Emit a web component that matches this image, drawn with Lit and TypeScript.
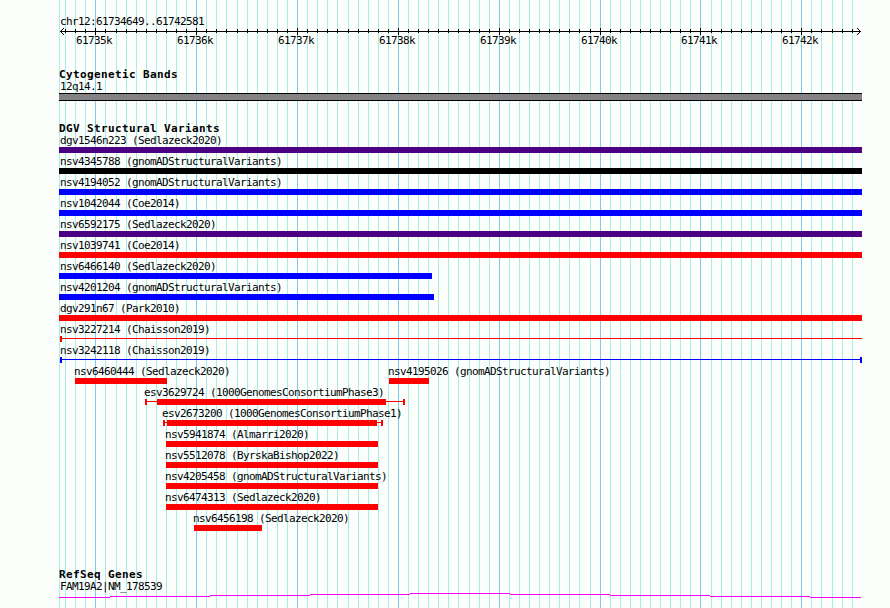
import { LitElement, css, html, nothing, svg } from 'lit'
import { customElement, property } from 'lit/decorators.js'
import { styleMap } from 'lit/directives/style-map.js'

const VIEW_START = 61734649
const VIEW_END = 61742581
const LEFT = 60
const SCALE = 800 / (VIEW_END - VIEW_START + 1)

const toX = (pos: number) => Math.round(LEFT + (pos - VIEW_START) * SCALE)

interface Tick {
  x: number
  major: boolean
  label: string
}

const ticks: Tick[] = []
for (let pos = Math.ceil(VIEW_START / 100) * 100; toX(pos) < LEFT + 800; pos += 100) {
  ticks.push({ x: toX(pos), major: pos % 1000 === 0, label: `${pos / 1000}k` })
}

// All coordinates are pixels on the panel. Whiskers mark the outer bounds of a variant.
interface Variant {
  name: string
  color: string
  label: number
  box?: [number, number]
  line?: [number, number]
  caps?: number[]
}

const full: [number, number] = [59, 862]

const rows: Variant[][] = [
  [{ name: 'dgv1546n223 (Sedlazeck2020)', color: '#4b0082', label: 60, box: full }],
  [{ name: 'nsv4345788 (gnomADStructuralVariants)', color: '#000', label: 60, box: full }],
  [{ name: 'nsv4194052 (gnomADStructuralVariants)', color: '#00f', label: 60, box: full }],
  [{ name: 'nsv1042044 (Coe2014)', color: '#00f', label: 60, box: full }],
  [{ name: 'nsv6592175 (Sedlazeck2020)', color: '#4b0082', label: 60, box: full }],
  [{ name: 'nsv1039741 (Coe2014)', color: '#f00', label: 60, box: full }],
  [{ name: 'nsv6466140 (Sedlazeck2020)', color: '#00f', label: 60, box: [59, 432] }],
  [{ name: 'nsv4201204 (gnomADStructuralVariants)', color: '#00f', label: 60, box: [59, 434] }],
  [{ name: 'dgv291n67 (Park2010)', color: '#f00', label: 60, box: full }],
  [{ name: 'nsv3227214 (Chaisson2019)', color: '#f00', label: 60, line: [60, 862], caps: [60] }],
  [{ name: 'nsv3242118 (Chaisson2019)', color: '#00f', label: 60, line: [60, 862], caps: [60, 860] }],
  [
    { name: 'nsv6460444 (Sedlazeck2020)', color: '#f00', label: 74, box: [75, 167] },
    { name: 'nsv4195026 (gnomADStructuralVariants)', color: '#f00', label: 388, box: [389, 429] },
  ],
  [{ name: 'esv3629724 (1000GenomesConsortiumPhase3)', color: '#f00', label: 144, box: [157, 386], line: [145, 405], caps: [145, 403] }],
  [{ name: 'esv2673200 (1000GenomesConsortiumPhase1)', color: '#f00', label: 162, box: [167, 377], line: [163, 383], caps: [163, 381] }],
  [{ name: 'nsv5941874 (Almarri2020)', color: '#f00', label: 165, box: [166, 378] }],
  [{ name: 'nsv5512078 (ByrskaBishop2022)', color: '#f00', label: 165, box: [166, 378] }],
  [{ name: 'nsv4205458 (gnomADStructuralVariants)', color: '#f00', label: 165, box: [166, 378] }],
  [{ name: 'nsv6474313 (Sedlazeck2020)', color: '#f00', label: 165, box: [166, 378] }],
  [{ name: 'nsv6456198 (Sedlazeck2020)', color: '#f00', label: 193, box: [194, 262] }],
]

@customElement('panel-grid')
export class PanelGrid extends LitElement {
  static styles = css`
    :host { display: block; }
    svg { display: block; shape-rendering: crispEdges; }
    .minor { fill: #a9ecea; }
    .major { fill: #7ccbeb; }
  `

  render() {
    return html`
      <svg width="890" height="608">
        <rect class="minor" x="59" y="0" width="1" height="608"></rect>
        ${ticks.map((t) => svg`<rect class=${t.major ? 'major' : 'minor'} x=${t.x} y="0" width="1" height="608"></rect>`)}
      </svg>
    `
  }
}

@customElement('panel-ruler')
export class PanelRuler extends LitElement {
  static styles = css`
    :host { display: block; height: 20px; }
    svg { display: block; shape-rendering: crispEdges; }
    text {
      font: 11px 'DejaVu Sans Mono', monospace;
      letter-spacing: -0.62px;
    }
  `

  render() {
    return html`
      <svg width="890" height="20">
        <rect x="60" y="4" width="801" height="1"></rect>
        ${[1, 2, 3].map(
          (d) => svg`
            <rect x=${60 + d} y=${4 - d} width="1" height="1"></rect>
            <rect x=${60 + d} y=${4 + d} width="1" height="1"></rect>
            <rect x=${860 - d} y=${4 - d} width="1" height="1"></rect>
            <rect x=${860 - d} y=${4 + d} width="1" height="1"></rect>
          `,
        )}
        ${ticks.map((t) =>
          t.major
            ? svg`
                <rect x=${t.x} y="1" width="1" height="7"></rect>
                <text x=${t.x - 19} y="17">${t.label}</text>
              `
            : svg`<rect x=${t.x} y="2" width="1" height="4"></rect>`,
        )}
      </svg>
    `
  }
}

@customElement('variant-row')
export class VariantRow extends LitElement {
  @property({ attribute: false }) variants: Variant[] = []

  static styles = css`
    :host { display: block; height: 21px; }
    .labels { display: grid; height: 15px; line-height: 18px; }
    .labels span { grid-area: 1 / 1; }
    svg { display: block; shape-rendering: crispEdges; }
  `

  render() {
    return html`
      <div class="labels">
        ${this.variants.map((v) => html`<span style=${styleMap({ paddingLeft: `${v.label}px` })}>${v.name}</span>`)}
      </div>
      <svg width="890" height="6">
        ${this.variants.map(
          (v) => svg`
            <g fill=${v.color}>
              ${v.line ? svg`<rect x=${v.line[0]} y="2" width=${v.line[1] - v.line[0]} height="1"></rect>` : nothing}
              ${v.box ? svg`<rect x=${v.box[0]} y="0" width=${v.box[1] - v.box[0]} height="6"></rect>` : nothing}
              ${(v.caps ?? []).map((x) => svg`<rect x=${x} y="0" width="2" height="6"></rect>`)}
            </g>
          `,
        )}
      </svg>
    `
  }
}

@customElement('gene-line')
export class GeneLine extends LitElement {
  static styles = css`
    :host { display: block; height: 5px; }
    svg { display: block; shape-rendering: crispEdges; }
    rect { fill: #f0f; }
  `

  render() {
    const stops = [59, 110, 210, 310, 410, 510, 610, 710, 810, 861]
    return html`
      <svg width="890" height="5">
        ${stops.slice(1).map(
          (x, i) => svg`<rect x=${stops[i]} y=${Math.abs(4 - i)} width=${x - stops[i]} height="1"></rect>`,
        )}
      </svg>
    `
  }
}

@customElement('app-root')
export class AppRoot extends LitElement {
  static styles = css`
    :host {
      display: grid;
      width: 890px;
      height: 608px;
      overflow: hidden;
      background: #fcfefc;
      color: #000;
      font: 11px/14px 'DejaVu Sans Mono', monospace;
      letter-spacing: -0.62px;
      white-space: nowrap;
    }

    panel-grid, main { grid-area: 1 / 1; }

    main {
      display: flex;
      flex-direction: column;
      padding-top: 15px;
    }

    .label { height: 12px; padding-left: 60px; }

    h2 {
      margin: 0;
      height: 12px;
      padding-left: 59px;
      font-size: 11px;
      line-height: 14px;
      font-weight: 700;
      letter-spacing: 0.378px;
    }

    .cytogenetic { margin-top: 21px; }
    .variants { margin-top: 21px; }
    .genes { margin-top: 37px; }

    .band {
      box-sizing: border-box;
      width: 803px;
      height: 8px;
      margin: 1px 0 0 59px;
      border: solid #000;
      border-width: 1px 0;
      background: #848284;
    }

    .variants h2 { height: 10px; }
    gene-line { margin-top: 1px; }
  `

  render() {
    return html`
      <panel-grid></panel-grid>
      <main>
        <div class="label">chr12:${VIEW_START}..${VIEW_END}</div>
        <panel-ruler></panel-ruler>
        <section class="cytogenetic">
          <h2>Cytogenetic Bands</h2>
          <div class="label">12q14.1</div>
          <div class="band"></div>
        </section>
        <section class="variants">
          <h2>DGV Structural Variants</h2>
          ${rows.map((r) => html`<variant-row .variants=${r}></variant-row>`)}
        </section>
        <section class="genes">
          <h2>RefSeq Genes</h2>
          <div class="label">FAM19A2|NM_178539</div>
          <gene-line></gene-line>
        </section>
      </main>
    `
  }
}
